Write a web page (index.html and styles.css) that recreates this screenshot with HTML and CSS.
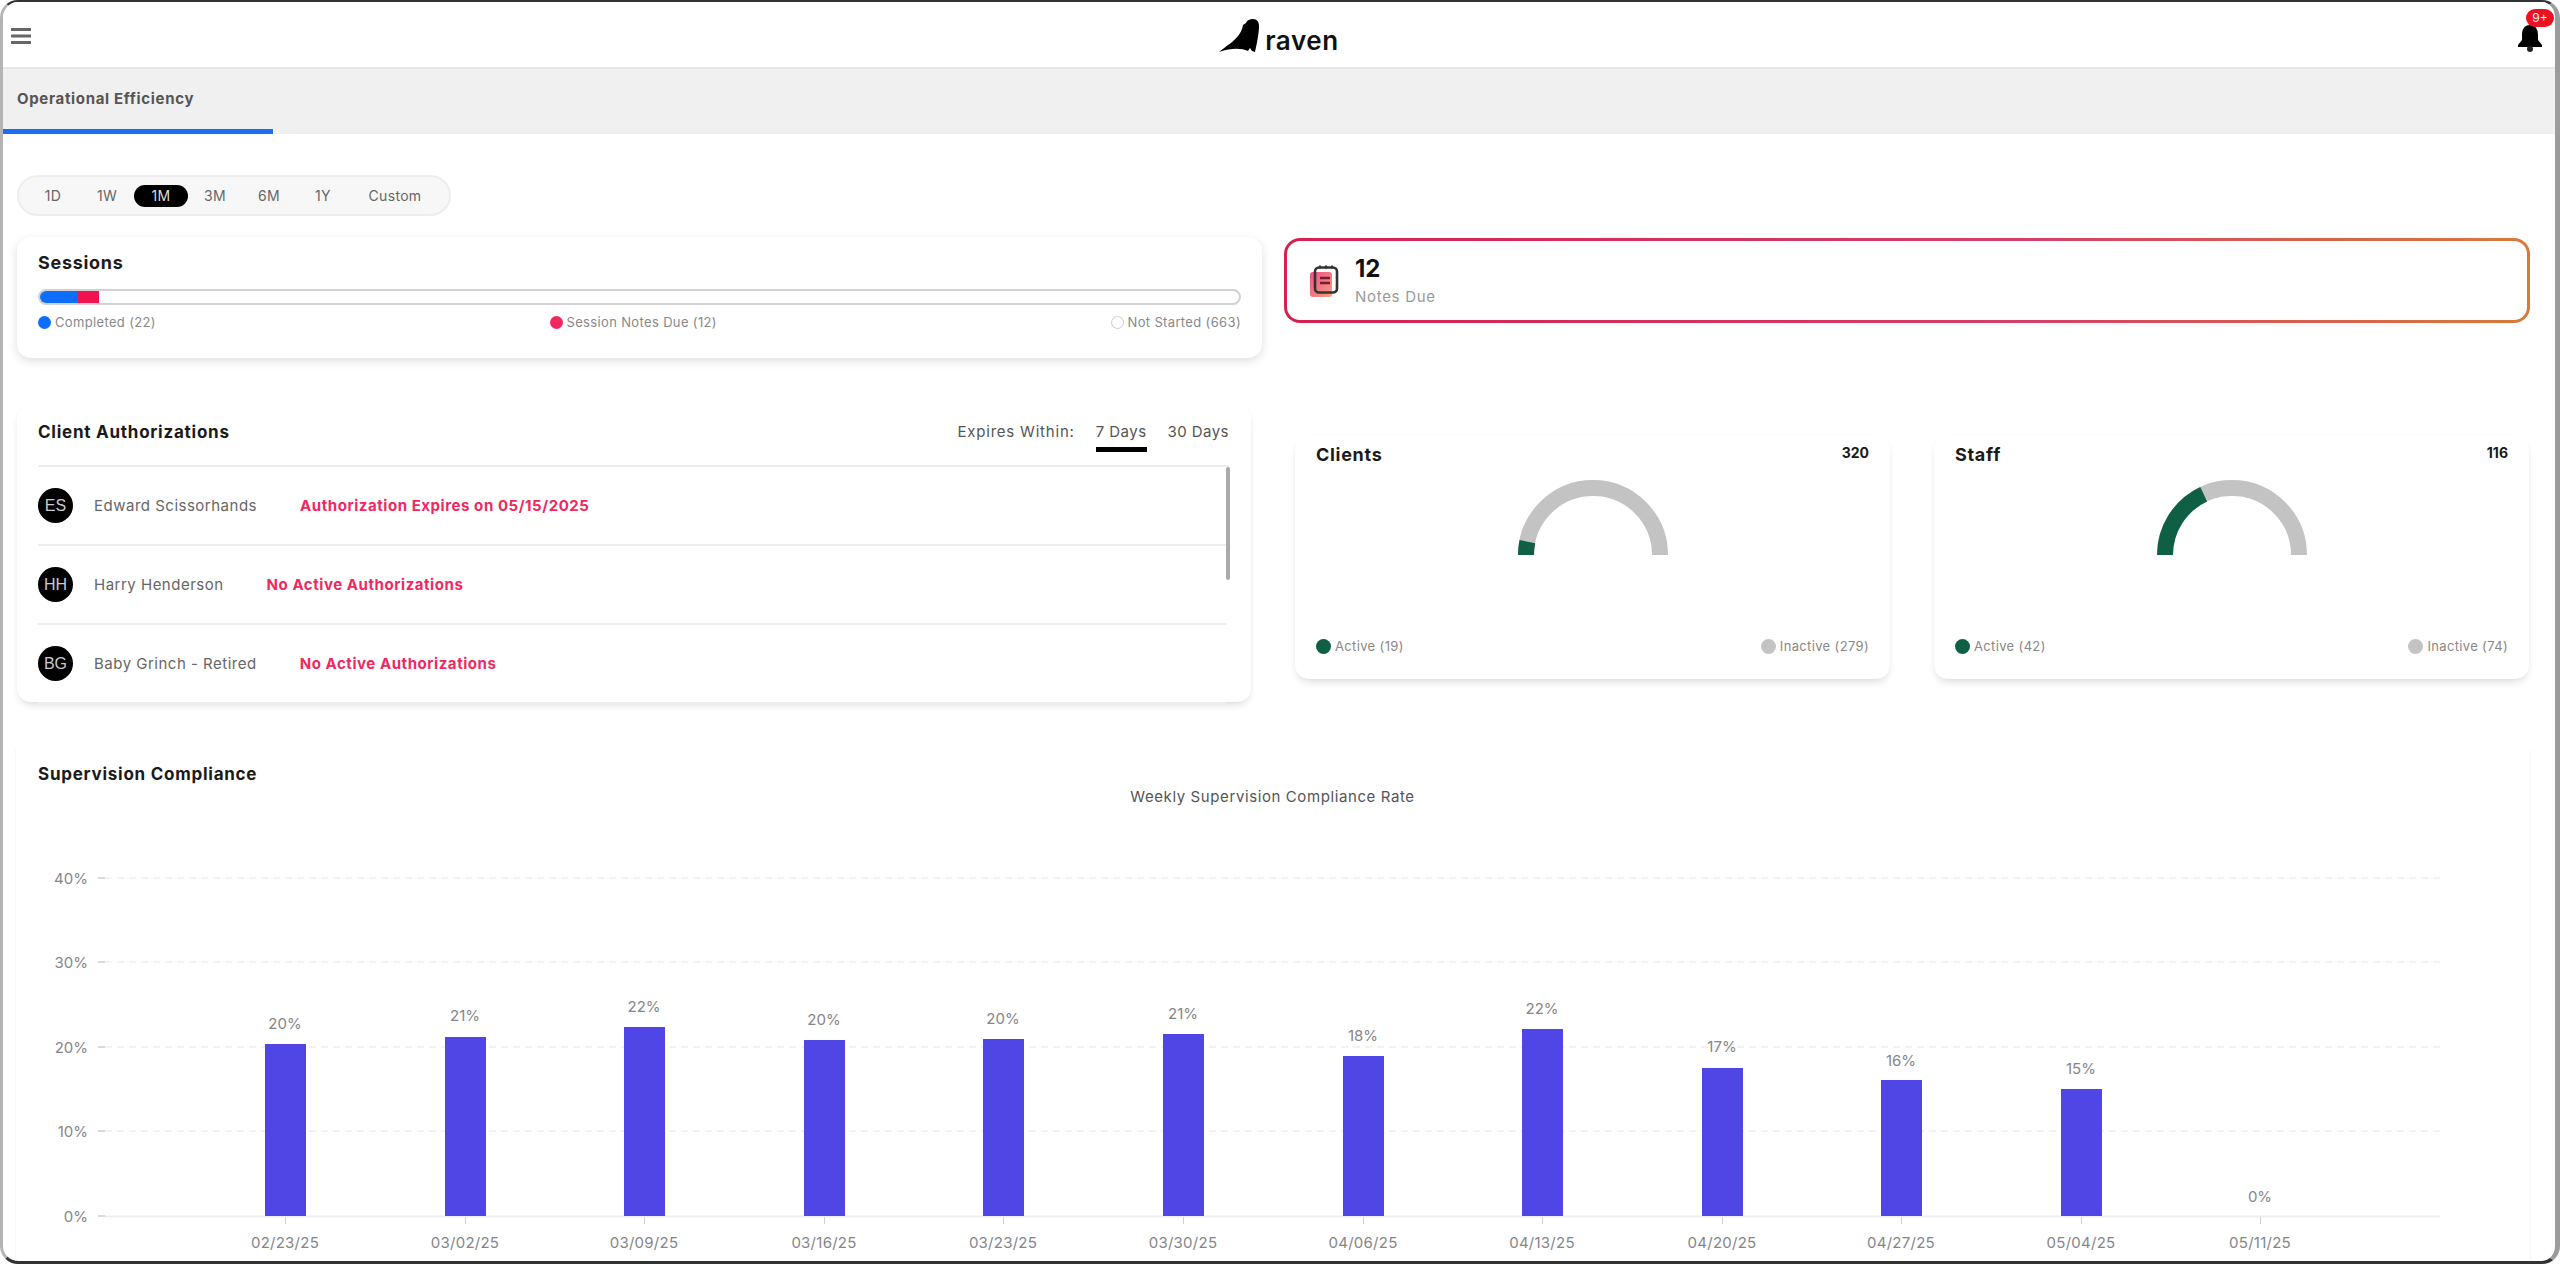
FILE: index.html
```html
<!DOCTYPE html>
<html lang="en">
  <head>
    <meta charset="UTF-8" />
    <meta name="viewport" content="width=device-width, initial-scale=1.0" />
    <title>Raven - Operational Efficiency</title>
    <link rel="stylesheet" href="styles.css">
  </head>
  <body>
    <div class="frame">
      <header class="top-bar">
        <svg class="menu-icon" width="20" height="16" viewBox="0 0 20 16">
          <path d="M0 1.500h20M0 8h20M0 14.500h20" stroke="#666" stroke-width="3" />
        </svg>
        <div class="logo">
          <svg width="41" height="34" viewBox="0 0 41 34">
            <path d="M0 33 L9 26 C15 22 21 16 23 10 L24 6 L27 4 C28 1 31 0 34 0 C38 0 40 3 40 7 C40 14 38 24 36 33 L33 32 L31 29 L29 32 C22 29 12 29 0 33 Z" fill="#000" />
          </svg>
          <span class="logo-text">raven</span>
        </div>
        <div class="bell">
          <svg width="26" height="28" viewBox="0 0 26 28">
            <path d="M13 1 C7 1 5 6 5 11 V16 L1 21 V23 H25 V21 L21 16 V11 C21 6 19 1 13 1 Z" fill="#000" />
            <circle cx="13" cy="25" r="3" fill="#222" />
          </svg>
          <span class="bell-badge">9+</span>
        </div>
      </header>

      <nav class="tab-bar">
        <div class="tab">Operational Efficiency</div>
      </nav>

      <main class="dashboard">
        <div class="range-row">
          <div class="range-picker">
            <span class="range-item">1D</span>
            <span class="range-item">1W</span>
            <span class="range-item active">1M</span>
            <span class="range-item">3M</span>
            <span class="range-item">6M</span>
            <span class="range-item">1Y</span>
            <span class="range-item custom">Custom</span>
          </div>
        </div>

        <section class="card sessions">
          <h2 class="card-title">Sessions</h2>
          <div class="progress">
            <div class="progress-done"></div>
            <div class="progress-due"></div>
          </div>
          <div class="legend">
            <div class="legend-item"><span class="dot blue"></span>Completed (22)</div>
            <div class="legend-item"><span class="dot pink"></span>Session Notes Due (12)</div>
            <div class="legend-item"><span class="dot hollow"></span>Not Started (663)</div>
          </div>
        </section>

        <section class="notes-due">
          <svg width="29" height="33" viewBox="0 0 29 33">
            <defs>
              <linearGradient id="noteFill" x1="0" y1="0" x2="1" y2="1">
                <stop offset="0" stop-color="#ee4f86" />
                <stop offset="1" stop-color="#f5a07c" />
              </linearGradient>
            </defs>
            <rect x="0" y="8" width="22" height="25" rx="3" fill="url(#noteFill)" />
            <rect x="5" y="3.500" width="22" height="25" rx="4" fill="none" stroke="#333" stroke-width="2.600" />
            <path d="M10 1.500v3M16 1.500v3M22 1.500v3" stroke="#333" stroke-width="2" />
            <path d="M10 14h10M10 19h10" stroke="#6d2036" stroke-width="2.400" />
          </svg>
          <div>
            <div class="notes-count">12</div>
            <div class="notes-label">Notes Due</div>
          </div>
        </section>

        <section class="card auths">
          <div class="auths-head">
            <h2 class="section-title">Client Authorizations</h2>
            <div class="expires">
              <span class="expires-label">Expires Within:</span>
              <span class="expires-tab active">7 Days</span>
              <span class="expires-tab">30 Days</span>
            </div>
          </div>
          <div class="auths-list">
            <div class="auth-row">
              <div class="avatar">ES</div>
              <span class="auth-name">Edward Scissorhands</span>
              <span class="auth-status">Authorization Expires on 05/15/2025</span>
            </div>
            <div class="auth-row">
              <div class="avatar">HH</div>
              <span class="auth-name">Harry Henderson</span>
              <span class="auth-status">No Active Authorizations</span>
            </div>
            <div class="auth-row">
              <div class="avatar">BG</div>
              <span class="auth-name">Baby Grinch - Retired</span>
              <span class="auth-status">No Active Authorizations</span>
            </div>
            <div class="scroll-thumb"></div>
          </div>
        </section>

        <div class="stat-row">
          <section class="card stat">
            <div class="stat-head">
              <h2 class="card-title">Clients</h2>
              <span class="stat-total">320</span>
            </div>
            <svg class="gauge" width="150" height="75" viewBox="0 0 150 75">
              <path d="M8 75 A67 67 0 0 1 142 75" fill="none" stroke="#c4c3c4" stroke-width="16" />
              <path d="M8 75 A67 67 0 0 1 9.350 61.640" fill="none" stroke="#0f5f45" stroke-width="16" />
            </svg>
            <div class="legend stat-legend">
              <div class="legend-item"><span class="dot green"></span>Active (19)</div>
              <div class="legend-item"><span class="dot grey"></span>Inactive (279)</div>
            </div>
          </section>

          <section class="card stat">
            <div class="stat-head">
              <h2 class="card-title">Staff</h2>
              <span class="stat-total">116</span>
            </div>
            <svg class="gauge" width="150" height="75" viewBox="0 0 150 75">
              <path d="M8 75 A67 67 0 0 1 142 75" fill="none" stroke="#c4c3c4" stroke-width="16" />
              <path d="M8 75 A67 67 0 0 1 46.700 14.300" fill="none" stroke="#0f5f45" stroke-width="16" />
            </svg>
            <div class="legend stat-legend">
              <div class="legend-item"><span class="dot green"></span>Active (42)</div>
              <div class="legend-item"><span class="dot grey"></span>Inactive (74)</div>
            </div>
          </section>
        </div>

        <section class="compliance">
          <h2 class="section-title">Supervision Compliance</h2>
          <div class="chart-title">Weekly Supervision Compliance Rate</div>
          <svg class="chart" width="2516" height="450" viewBox="15 810 2516 450">
            <g class="grid-lines">
              <path d="M105 878H2440M105 962H2440M105 1047H2440M105 1131H2440" />
            </g>
            <path d="M98 878h7M98 962h7M98 1047h7M98 1131h7M98 1216h7" stroke="#d9d9de" stroke-width="2" />
            <path d="M105 1216.500H2440" stroke="#efedf1" stroke-width="2" />

            <g class="axis-label" text-anchor="end">
              <text x="88" y="884">40%</text>
              <text x="88" y="968">30%</text>
              <text x="88" y="1053">20%</text>
              <text x="88" y="1137">10%</text>
              <text x="88" y="1222">0%</text>
            </g>

            <g fill="#4f46e5">
              <rect x="265" y="1044" width="41" height="172" />
              <rect x="445" y="1037" width="41" height="179" />
              <rect x="624" y="1027" width="41" height="189" />
              <rect x="804" y="1040" width="41" height="176" />
              <rect x="983" y="1039" width="41" height="177" />
              <rect x="1163" y="1034" width="41" height="182" />
              <rect x="1343" y="1056" width="41" height="160" />
              <rect x="1522" y="1029" width="41" height="187" />
              <rect x="1702" y="1068" width="41" height="148" />
              <rect x="1881" y="1080" width="41" height="136" />
              <rect x="2061" y="1089" width="41" height="127" />
            </g>

            <path d="M285.500 1217v7M465.500 1217v7M644.500 1217v7M824.500 1217v7M1003.500 1217v7M1183.500 1217v7M1363.500 1217v7M1542.500 1217v7M1722.500 1217v7M1901.500 1217v7M2081.500 1217v7M2260.500 1217v7" stroke="#cfcfd4" />

            <g class="axis-label" text-anchor="middle">
              <text x="285" y="1029">20%</text>
              <text x="465" y="1021">21%</text>
              <text x="644" y="1012">22%</text>
              <text x="824" y="1025">20%</text>
              <text x="1003" y="1024">20%</text>
              <text x="1183" y="1019">21%</text>
              <text x="1363" y="1041">18%</text>
              <text x="1542" y="1014">22%</text>
              <text x="1722" y="1052">17%</text>
              <text x="1901" y="1066">16%</text>
              <text x="2081" y="1074">15%</text>
              <text x="2260" y="1202">0%</text>

              <text class="date" x="285" y="1248">02/23/25</text>
              <text class="date" x="465" y="1248">03/02/25</text>
              <text class="date" x="644" y="1248">03/09/25</text>
              <text class="date" x="824" y="1248">03/16/25</text>
              <text class="date" x="1003" y="1248">03/23/25</text>
              <text class="date" x="1183" y="1248">03/30/25</text>
              <text class="date" x="1363" y="1248">04/06/25</text>
              <text class="date" x="1542" y="1248">04/13/25</text>
              <text class="date" x="1722" y="1248">04/20/25</text>
              <text class="date" x="1901" y="1248">04/27/25</text>
              <text class="date" x="2081" y="1248">05/04/25</text>
              <text class="date" x="2260" y="1248">05/11/25</text>
            </g>
          </svg>
        </section>
      </main>
    </div>
  </body>
</html>
```

FILE: styles.css
```css
* {
  margin: 0;
  padding: 0;
  box-sizing: border-box;
  font-family: Inter, 'Liberation Sans', sans-serif;
}

body {
  overflow: hidden;
  height: 100vh;
  background-color: #fff;
}

.frame {
  height: 100vh;
  overflow: hidden;
  background-color: #fff;
  border-style: solid;
  border-width: 2px 5px 3px 3px;
  border-color: #333 #9c9c9e #333 #b4b4b6;
  border-radius: 18px;
}

.top-bar {
  height: 65px;
  display: grid;
  grid-template-columns: 1fr auto 1fr;
  align-items: center;
  background-color: #fff;
}

.menu-icon {
  margin-left: 8px;
  margin-top: 3px;
}

.logo {
  display: flex;
  align-items: flex-end;
  gap: 5px;
  margin-top: 2px;
}

.logo-text {
  font-size: 26px;
  font-weight: 600;
  line-height: 24px;
  letter-spacing: 0.6px;
  color: #111;
}

.bell {
  position: relative;
  justify-self: end;
  margin-right: 12px;
  margin-top: 6px;
  height: 28px;
}

.bell-badge {
  position: absolute;
  top: -15px;
  left: 9px;
  width: 28px;
  height: 18px;
  border-radius: 9px;
  background-color: #ee1122;
  color: #fff;
  font-size: 12px;
  line-height: 18px;
  text-align: center;
}

.tab-bar {
  height: 67px;
  background-color: #f1f0f1;
  border-top: 2px solid #e8e7e8;
}

.tab {
  width: 270px;
  height: 65px;
  padding: 19px 0 0 14px;
  border-bottom: 5px solid #1a6ff0;
  font-size: 15px;
  font-weight: 700;
  line-height: 22px;
  letter-spacing: 0.67px;
  color: #555;
}

.dashboard {
  display: grid;
  grid-template-columns: 1245px 1246px;
  column-gap: 22px;
  align-items: start;
  padding: 41px 25px 0 14px;
}

.range-row {
  grid-column: 1 / -1;
  margin-bottom: 21px;
}

.range-picker {
  display: flex;
  align-items: center;
  width: 434px;
  height: 41px;
  padding: 0 7px;
  background-color: #f8f7f8;
  border: 2px solid #eeedee;
  border-radius: 21px;
}

.range-item {
  width: 54px;
  height: 22px;
  border-radius: 11px;
  font-size: 14px;
  line-height: 22px;
  letter-spacing: 0.3px;
  text-align: center;
  color: #666;
}

.range-item.active {
  background-color: #000;
  color: #ddd;
}

.range-item.custom {
  width: 86px;
  margin-left: 2px;
}

.card {
  background-color: #fff;
  border-radius: 14px;
  box-shadow: 0 3px 10px rgba(0, 0, 0, 0.13);
}

.card-title {
  font-size: 18px;
  font-weight: 700;
  line-height: 22px;
  letter-spacing: 0.7px;
  color: #1a1a1a;
}

.section-title {
  font-size: 17px;
  font-weight: 700;
  line-height: 22px;
  letter-spacing: 0.75px;
  color: #1a1a1a;
}

.sessions {
  height: 121px;
  padding: 15px 21px 0;
}

.progress {
  display: flex;
  height: 16px;
  margin-top: 15px;
  overflow: hidden;
  background-color: #fff;
  border: 2px solid #d2d2d2;
  border-radius: 8px;
}

.progress-done {
  width: 38px;
  background-color: #0d6efd;
}

.progress-due {
  width: 21px;
  background-color: #f0134f;
}

.legend {
  display: flex;
  justify-content: space-between;
  margin-top: 8px;
}

.legend-item {
  display: flex;
  align-items: center;
  gap: 4px;
  font-size: 13px;
  line-height: 18px;
  letter-spacing: 0.35px;
  color: #888;
}

.dot {
  width: 13px;
  height: 13px;
  border-radius: 50%;
}

.dot.blue {
  background-color: #0d6efd;
}

.dot.pink {
  background-color: #f0285f;
}

.dot.hollow {
  background-color: #fff;
  border: 1px solid #ccc;
}

.dot.green {
  background-color: #0f5f45;
}

.dot.grey {
  background-color: #c4c3c4;
}

.notes-due {
  display: flex;
  align-items: center;
  gap: 16px;
  height: 85px;
  margin-top: 1px;
  padding-left: 23px;
  background: linear-gradient(#fff, #fff) padding-box,
    linear-gradient(90deg, #d4214f, #d63f66 60%, #d97a3a) border-box;
  border: 3px solid transparent;
  border-radius: 16px;
}

.notes-count {
  font-size: 24px;
  font-weight: 700;
  line-height: 30px;
  color: #111;
}

.notes-label {
  margin-top: 3px;
  font-size: 15px;
  line-height: 20px;
  letter-spacing: 0.7px;
  color: #999;
}

/* these cards only have a shadow along the bottom */
.auths,
.stat {
  box-shadow: 0 5px 8px -3px rgba(0, 0, 0, 0.16), 0 0 4px rgba(0, 0, 0, 0.02);
}

.auths {
  height: 297px;
  margin-top: 47px;
  margin-right: 11px;
  padding: 0 22px 0 21px;
}

.auths-head {
  display: flex;
  justify-content: space-between;
  height: 62px;
  padding-top: 16px;
  border-bottom: 2px solid #eeedee;
}

.expires {
  display: flex;
  align-items: flex-start;
  gap: 21px;
  font-size: 15px;
  line-height: 22px;
  letter-spacing: 0.45px;
  color: #555;
}

.expires-label {
  letter-spacing: 0.8px;
}

.expires-tab {
  padding-bottom: 4px;
}

.expires-tab.active {
  border-bottom: 5px solid #000;
}

.auths-list {
  position: relative;
}

.auth-row {
  display: flex;
  align-items: center;
  height: 79px;
  margin-right: 3px;
  border-bottom: 2px solid #eeedee;
}

.auth-row:last-of-type {
  border-bottom: none;
}

.avatar {
  flex-shrink: 0;
  width: 35px;
  height: 35px;
  margin-right: 21px;
  border-radius: 50%;
  background-color: #000;
  color: #ccc;
  font-family: 'Liberation Sans', sans-serif;
  font-size: 16px;
  line-height: 35px;
  text-align: center;
}

.auth-name {
  margin-right: 43px;
  font-size: 15px;
  letter-spacing: 0.5px;
  color: #666;
}

.auth-status {
  font-size: 15px;
  font-weight: 700;
  letter-spacing: 0.56px;
  color: #f0285f;
}

.scroll-thumb {
  position: absolute;
  top: 0;
  right: -1px;
  width: 4px;
  height: 113px;
  border-radius: 2px;
  background-color: #aaa;
}

.stat-row {
  display: flex;
  gap: 44px;
  margin-top: 77px;
  padding-left: 11px;
}

.stat {
  width: 595px;
  height: 244px;
  padding: 9px 21px 0;
}

.stat-head {
  display: flex;
  justify-content: space-between;
}

.stat-total {
  font-size: 14px;
  font-weight: 700;
  line-height: 18px;
  color: #1a1a1a;
}

.gauge {
  display: block;
  margin: 14px auto 0;
}

.stat-legend {
  margin-top: 82px;
}

.stat-legend .dot {
  width: 15px;
  height: 15px;
}

.compliance {
  grid-column: 1 / -1;
  height: 520px;
  margin: 48px -1px 0 -2px;
  padding: 13px 0 0 22px;
  border-left: 1px solid #f8f7f8;
  border-right: 1px solid #f8f7f8;
}

.chart-title {
  margin: 1px 0 0 -23px;
  font-size: 15px;
  line-height: 22px;
  letter-spacing: 0.6px;
  text-align: center;
  color: #555;
}

.chart {
  display: block;
  margin: 2px 0 0 -23px;
}

.grid-lines path {
  fill: none;
  stroke: #f3f1f5;
  stroke-width: 2;
  stroke-dasharray: 7 5;
}

.axis-label text {
  font-size: 15px;
  fill: #858589;
}

.axis-label .date {
  letter-spacing: 0.25px;
}
```
